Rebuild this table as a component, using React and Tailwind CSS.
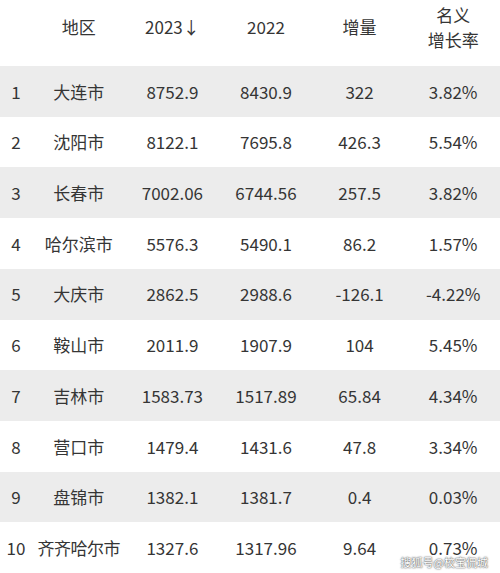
const rows = [
  ['1', '大连市', '8752.9', '8430.9', '322', '3.82%'],
  ['2', '沈阳市', '8122.1', '7695.8', '426.3', '5.54%'],
  ['3', '长春市', '7002.06', '6744.56', '257.5', '3.82%'],
  ['4', '哈尔滨市', '5576.3', '5490.1', '86.2', '1.57%'],
  ['5', '大庆市', '2862.5', '2988.6', '-126.1', '-4.22%'],
  ['6', '鞍山市', '2011.9', '1907.9', '104', '5.45%'],
  ['7', '吉林市', '1583.73', '1517.89', '65.84', '4.34%'],
  ['8', '营口市', '1479.4', '1431.6', '47.8', '3.34%'],
  ['9', '盘锦市', '1382.1', '1381.7', '0.4', '0.03%'],
  ['10', '齐齐哈尔市', '1327.6', '1317.96', '9.64', '0.73%'],
];

export default function App() {
  return (
    <div
      className="relative w-[500px] h-[573px] flex flex-col bg-white text-[#353535] text-[17px] overflow-hidden"
      style={{ fontFamily: '"Noto Sans CJK SC", "Noto Sans", sans-serif' }}
    >
      {/* 表头 */}
      <div className="h-[66px] shrink-0 grid grid-cols-[32px_repeat(5,1fr)] items-center text-center pb-[12px]">
        <div />
        <div>地区</div>
        <div>2023↓</div>
        <div>2022</div>
        <div>增量</div>
        <div className="leading-[25px]">
          名义
          <br />
          增长率
        </div>
      </div>

      {/* 数据行 */}
      {rows.map((r, i) => (
        <div
          key={i}
          className={`flex-1 grid grid-cols-[32px_repeat(5,1fr)] items-center text-center ${
            i % 2 === 0 ? 'bg-[#ececec]' : 'bg-white'
          }`}
        >
          {r.map((c, j) => (
            <div key={j} className={j === 1 && c.length > 4 ? 'tracking-[-0.5px] whitespace-nowrap' : ''}>
              {c}
            </div>
          ))}
        </div>
      ))}

      {/* 水印 */}
      <div
        className="absolute right-[12px] bottom-[3px] text-[11px] text-white"
        style={{ textShadow: '0 0 2px #555, 0 0 1px #555' }}
      >
        搜狐号@校宝侃城
      </div>
    </div>
  );
}
